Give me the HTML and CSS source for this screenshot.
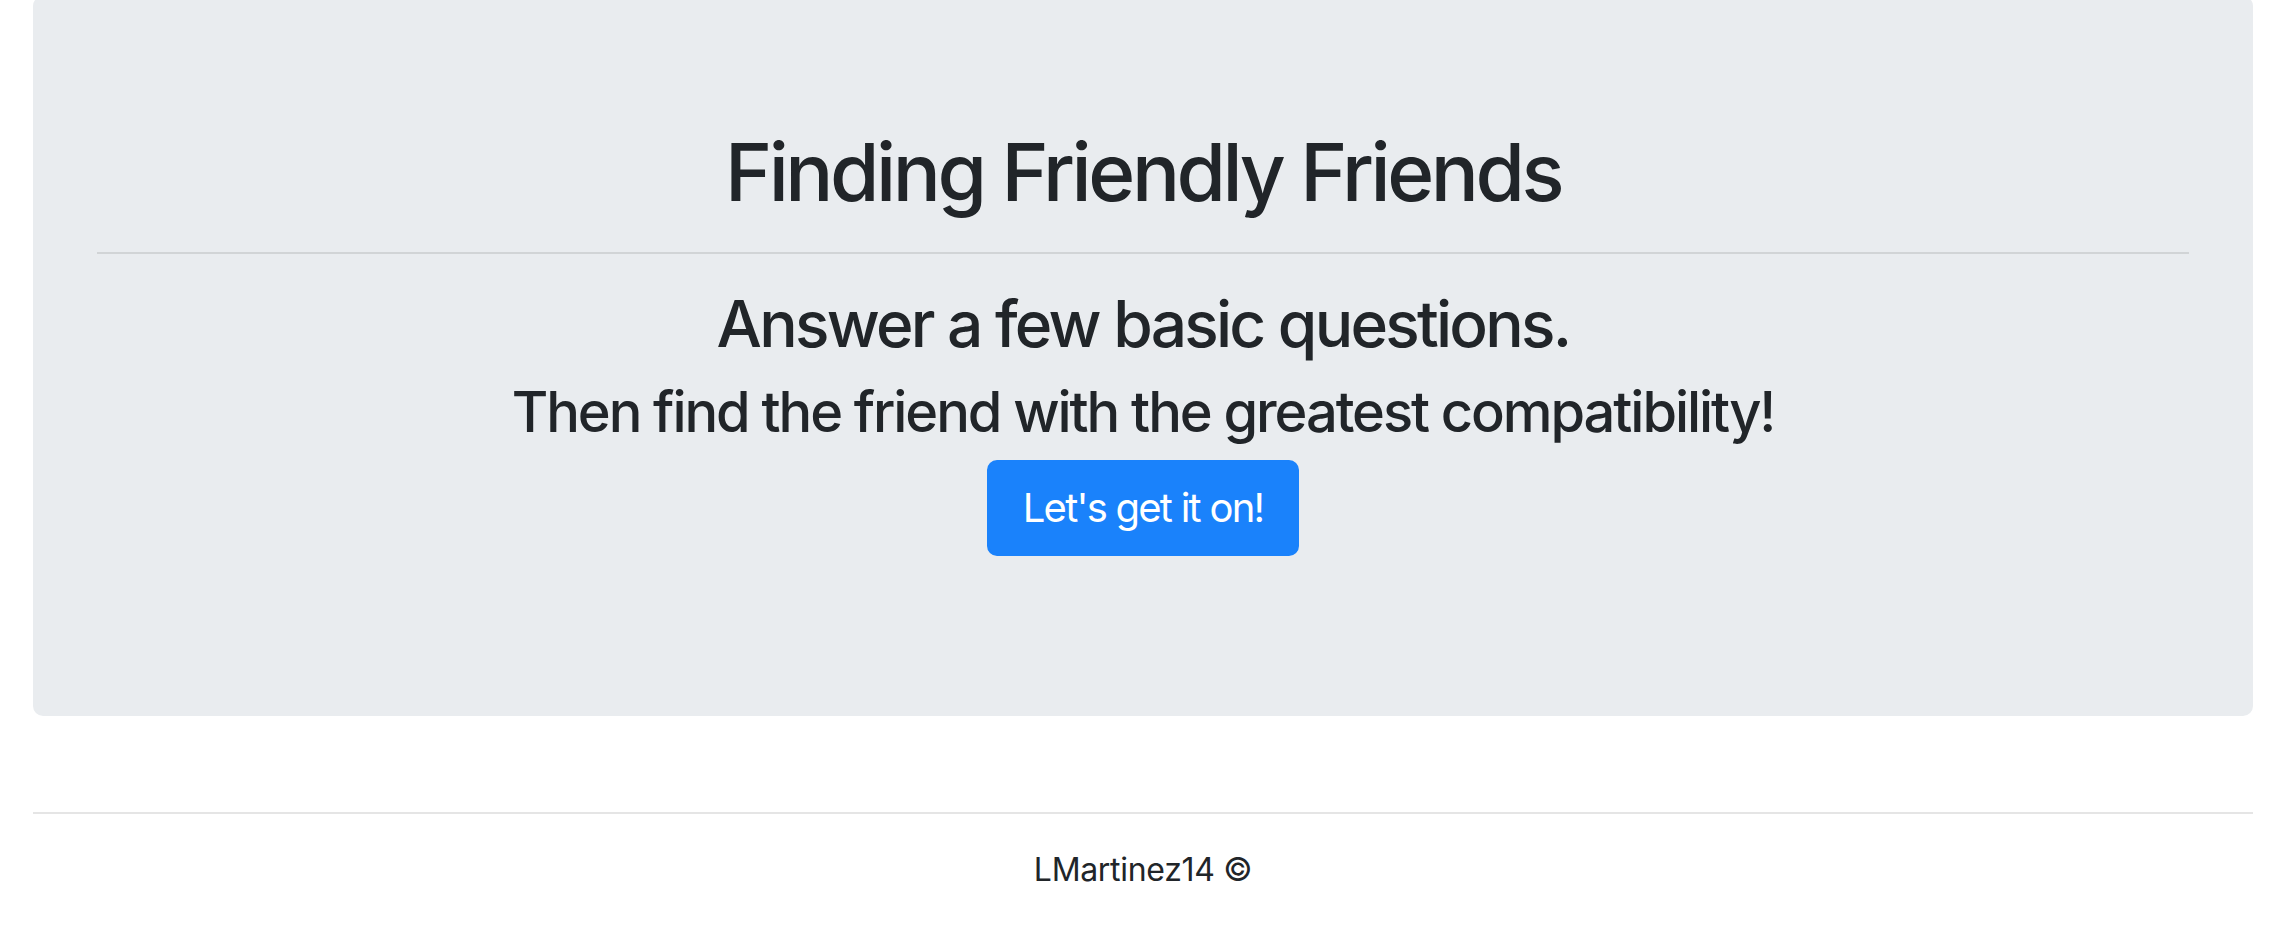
FILE: index.html
```html
<!DOCTYPE html>
<html lang="en">
<head>
<meta charset="utf-8">
<title>Finding Friendly Friends</title>
<link rel="stylesheet" href="styles.css">
</head>
<body>
<div class="container">
  <div class="jumbotron">
    <h1 class="title">Finding Friendly Friends</h1>
    <hr class="rule">
    <h2 class="sub">Answer a few basic questions.</h2>
    <h3 class="sub2">Then find the friend with the greatest compatibility!</h3>
    <p class="lead"><a class="btn" href="#">Let's get it on!</a></p>
  </div>
  <footer class="footer">
    <hr class="footer-rule">
    <p class="credit">LMartinez14 ©</p>
  </footer>
</div>
</body>
</html>
```
FILE: styles.css
```css
html, body {
  margin: 0;
  padding: 0;
  background: #ffffff;
}
body {
  font-family: Inter, "Noto Sans", "Liberation Sans", sans-serif;
  font-size: 32px;
  line-height: 1.5;
  color: #212529;
}
.container {
  max-width: 2220px;
  margin: 0 auto;
  padding: 0 30px;
}
.jumbotron {
  margin-top: -4px;
  margin-bottom: 64px;
  padding: 128px 64px;
  background: #e9ecef;
  border-radius: 10px;
  text-align: center;
}
.title {
  margin: 0 0 16px;
  font-size: 80px;
  font-weight: 500;
  line-height: 1.2;
  letter-spacing: -0.043em;
}
.rule {
  margin: 32px 0;
  border: 0;
  border-top: 2px solid rgba(0, 0, 0, 0.1);
  height: 0;
}
.sub {
  margin: 0 0 16px;
  font-size: 64px;
  font-weight: 500;
  line-height: 1.2;
  letter-spacing: -0.043em;
}
.sub2 {
  margin: 0 0 14px;
  font-size: 56px;
  font-weight: 500;
  line-height: 1.2;
  letter-spacing: -0.037em;
}
.lead {
  margin: 0 0 32px;
  font-size: 40px;
  line-height: 1.5;
}
.btn {
  display: inline-block;
  padding: 16px 34px;
  font-size: 40px;
  line-height: 1.5;
  font-weight: 400;
  letter-spacing: -0.044em;
  color: #ffffff;
  background: #1a82fb;
  border: 2px solid #1a82fb;
  border-radius: 10px;
  text-decoration: none;
  vertical-align: middle;
}
.footer {
  display: flow-root;
}
.footer-rule {
  margin: 32px 0;
  border: 0;
  border-top: 2px solid rgba(0, 0, 0, 0.1);
  height: 0;
}
.credit {
  margin: 0 0 32px;
  text-align: center;
  letter-spacing: -0.01em;
}
```
